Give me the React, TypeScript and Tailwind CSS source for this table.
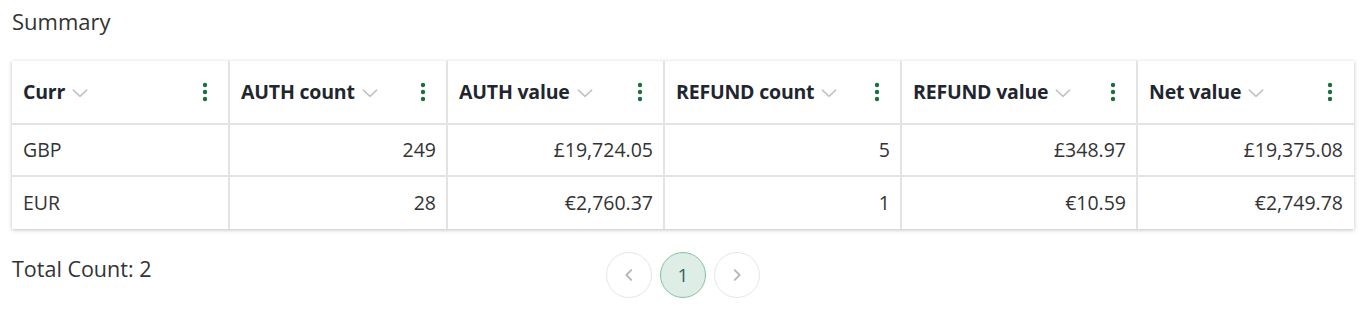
import React from 'react';

const cols = ['Curr', 'AUTH count', 'AUTH value', 'REFUND count', 'REFUND value', 'Net value'];

const rows = [
  ['GBP', '249', '£19,724.05', '5', '£348.97', '£19,375.08'],
  ['EUR', '28', '€2,760.37', '1', '€10.59', '€2,749.78'],
];

const Chevron = () => (
  <svg width="20" height="20" viewBox="0 0 24 24" fill="none" stroke="#c2c2c2" strokeWidth="1.8" strokeLinecap="round" strokeLinejoin="round">
    <path d="M4 8.5l8 7.5 8-7.5" />
  </svg>
);

const Kebab = () => (
  <svg width="6" height="20" viewBox="0 0 6 20" fill="#18703f">
    <circle cx="3" cy="3" r="2.2" />
    <circle cx="3" cy="10" r="2.2" />
    <circle cx="3" cy="17" r="2.2" />
  </svg>
);

export default function App() {
  return (
    <div className="w-[1366px] h-[312px] bg-white px-3 text-[#2a2f36]" style={{ fontFamily: '"Open Sans", "Noto Sans", sans-serif' }}>
      <div className="pt-[6px] text-[22px] leading-[30px] text-[#333]">Summary</div>
      <div className="mt-[25px] w-[1342px] bg-white shadow-[0_1px_4px_rgba(0,0,0,0.25)]">
        <div className="grid grid-cols-[217px_218px_217px_237px_236px_217px] h-[64px] border-b-2 border-[#e3e3e3]">
          {cols.map((c, i) => (
            <div key={c} className={`flex items-center pl-[11px] pr-[21px] font-bold text-[19.5px] tracking-[-0.2px] text-[#1f2630] ${i > 0 ? 'border-l-2 border-[#e3e3e3] -ml-[1px]' : ''}`}>
              <span>{c}</span>
              <span className="ml-[5px] mt-[2px]"><Chevron /></span>
              <span className="ml-auto"><Kebab /></span>
            </div>
          ))}
        </div>
        {rows.map((r, ri) => (
          <div key={ri} className={`grid grid-cols-[217px_218px_217px_237px_236px_217px] h-[52px] ${ri === 0 ? 'border-b-2 border-[#e3e3e3]' : ''}`}>
            {r.map((v, i) => (
              <div key={i} className={`flex items-center px-[11px] text-[19.5px] text-[#333] ${i === 0 ? 'justify-start' : 'justify-end border-l-2 border-[#e3e3e3] -ml-[1px]'}`}>
                {v}
              </div>
            ))}
          </div>
        ))}
      </div>
      <div className="relative mt-[22px] h-[48px]">
        <div className="absolute left-0 top-[2px] text-[21.5px] leading-[32px] text-[#333]">Total Count: 2</div>
        <div className="flex justify-center items-center gap-2 pt-[1px]">
          <button className="w-[46px] h-[46px] rounded-full border border-[#e6e6e6] flex items-center justify-center">
            <svg width="18" height="18" viewBox="0 0 24 24" fill="none" stroke="#b8b8b8" strokeWidth="2.6" strokeLinecap="round" strokeLinejoin="round"><path d="M15 5.5l-6.5 6.5 6.5 6.5" /></svg>
          </button>
          <button className="w-[46px] h-[46px] rounded-full border border-[#86c1a0] bg-[#deede5] flex items-center justify-center text-[19px] text-[#2b6a5e]">1</button>
          <button className="w-[46px] h-[46px] rounded-full border border-[#e6e6e6] flex items-center justify-center">
            <svg width="18" height="18" viewBox="0 0 24 24" fill="none" stroke="#b8b8b8" strokeWidth="2.6" strokeLinecap="round" strokeLinejoin="round"><path d="M9 5.5l6.5 6.5-6.5 6.5" /></svg>
          </button>
        </div>
      </div>
    </div>
  );
}
